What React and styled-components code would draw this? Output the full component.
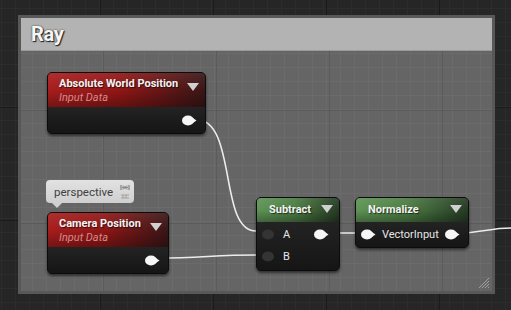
import styled, { createGlobalStyle } from "styled-components";

const Global = createGlobalStyle`
  html, body { margin: 0; padding: 0; background: #262626; }
  body { font-family: Roboto, "Open Sans", sans-serif; }
`;

const Canvas = styled.div`
  position: relative;
  width: 511px;
  height: 310px;
  overflow: hidden;
  background-color: #262626;
  background-image:
    linear-gradient(90deg, #1b1b1b 1px, transparent 1px),
    linear-gradient(0deg, #1b1b1b 1px, transparent 1px),
    linear-gradient(90deg, #2c2c2c 1px, transparent 1px),
    linear-gradient(0deg, #2c2c2c 1px, transparent 1px);
  background-size: 113px 113px, 113px 113px, 14px 14px, 14px 14px;
  background-position: -13px -5px;
`;

const Comment = styled.div`
  position: absolute;
  left: 18px;
  top: 15px;
  width: 477px;
  height: 279px;
  box-sizing: border-box;
  border: 3px solid #585858;
  display: flex;
  flex-direction: column;
  background-color: #656565;
  background-image:
    linear-gradient(90deg, #5b5b5b 1px, transparent 1px),
    linear-gradient(0deg, #5b5b5b 1px, transparent 1px),
    linear-gradient(90deg, #6b6b6b 1px, transparent 1px),
    linear-gradient(0deg, #6b6b6b 1px, transparent 1px);
  background-size: 113px 113px, 113px 113px, 14px 14px, 14px 14px;
  background-position: -31px -20px;
`;

const CommentHeader = styled.div`
  height: 32px;
  background: #b3b3b3;
  border-bottom: 1px solid #9a9a9a;
  display: flex;
  align-items: center;
  padding-left: 10px;
  font-size: 20px;
  font-weight: 700;
  color: #f6f6f6;
  text-shadow: 1px 1px 1px #1a1a1a, 0 0 2px #333;
  letter-spacing: -0.3px;
`;

const Grip = styled.svg`
  position: absolute;
  right: 2px;
  bottom: 2px;
`;

const Node = styled.div`
  position: absolute;
  left: ${(p) => p.$x}px;
  top: ${(p) => p.$y}px;
  width: ${(p) => p.$w}px;
  border-radius: 5px;
  background: #1c1c1c;
  border: 1px solid #0c0c0c;
  box-shadow: 0 2px 3px rgba(0, 0, 0, 0.55);
  overflow: hidden;
  display: flex;
  flex-direction: column;
`;

const Header = styled.div`
  position: relative;
  height: ${(p) => p.$h}px;
  box-sizing: border-box;
  padding: ${(p) => (p.$tall ? "4px 22px 0 11px" : "0 22px 0 12px")};
  display: flex;
  flex-direction: column;
  justify-content: ${(p) => (p.$tall ? "flex-start" : "center")};
  background: ${(p) =>
    p.$kind === "red"
      ? "linear-gradient(90deg, #a81d1d 0%, #911616 45%, #3a1616 100%)"
      : "linear-gradient(90deg, #5f9455 0%, #4c7d44 45%, #263a24 100%)"};
  &::after {
    content: "";
    position: absolute;
    inset: 0;
    background: linear-gradient(180deg, rgba(255,255,255,0.08) 0%, rgba(0,0,0,0) 50%, rgba(0,0,0,0.3) 100%);
  }
`;

const Title = styled.div`
  position: relative;
  z-index: 1;
  font-size: 11px;
  font-weight: 700;
  color: #f2f2f2;
  line-height: 14px;
  white-space: nowrap;
  text-shadow: 1px 1px 1px rgba(0,0,0,0.6);
`;

const Sub = styled.div`
  position: relative;
  z-index: 1;
  font-size: 11px;
  font-style: italic;
  color: #d9898b;
  line-height: 14px;
  white-space: nowrap;
`;

const Arrow = styled.div`
  position: absolute;
  z-index: 1;
  right: 6px;
  top: ${(p) => p.$top}px;
  width: 0;
  height: 0;
  border-left: 6px solid transparent;
  border-right: 6px solid transparent;
  border-top: 8px solid #d0d0d0;
`;

const Body = styled.div`
  display: flex;
  flex-direction: column;
  padding: ${(p) => p.$pad || "0"};
  background: linear-gradient(180deg, #232323, #151515);
  flex: 1;
`;

const Row = styled.div`
  height: 22px;
  display: flex;
  align-items: center;
  justify-content: ${(p) => p.$justify || "space-between"};
  padding: 0 ${(p) => p.$pr || 8}px 0 ${(p) => p.$pl || 5}px;
`;

const Side = styled.div`
  display: flex;
  align-items: center;
  gap: 6px;
`;

const Label = styled.span`
  font-size: 11px;
  color: #e6e6e6;
`;

const Pin = ({ dim }) => (
  <svg width="15" height="11" viewBox="0 0 15 11">
    {dim ? (
      <ellipse cx="6" cy="5.5" rx="6" ry="5" fill="#343434" />
    ) : (
      <>
        <ellipse cx="6" cy="5.5" rx="6" ry="5" fill="#f6f6f6" />
        <path d="M10.5 2.8 L14.5 5.5 L10.5 8.2 Z" fill="#f6f6f6" />
      </>
    )}
  </svg>
);

const Bubble = styled.div`
  position: absolute;
  left: 46px;
  top: 180px;
  width: 88px;
  height: 23px;
  box-sizing: border-box;
  border-radius: 4px;
  background: linear-gradient(180deg, #e2e2e2, #cfcfcf);
  display: flex;
  align-items: center;
  padding-left: 8px;
  font-size: 11.5px;
  color: #404040;
  &::after {
    content: "";
    position: absolute;
    left: 6px;
    bottom: -5px;
    border-left: 5px solid transparent;
    border-right: 5px solid transparent;
    border-top: 5px solid #cfcfcf;
  }
`;

const BubbleIcons = styled.svg`
  position: absolute;
  right: 3px;
  top: 3px;
`;

const Wires = styled.svg`
  position: absolute;
  left: 0;
  top: 0;
`;

export default function App() {
  return (
    <>
      <Global />
      <Canvas>
        <Comment>
          <CommentHeader>Ray</CommentHeader>
          <Grip width="13" height="13" viewBox="0 0 13 13">
            <path d="M12 2 L2 12 M12 5 L5 12 M12 8 L8 12 M12 11 L11 12" stroke="#a0a0a0" strokeWidth="1" />
          </Grip>
        </Comment>

        <Wires width="511" height="310">
          <g fill="none" stroke="#ececec" strokeWidth="1.6">
            <path d="M195 119 C238 119 218 231 256 231" />
            <path d="M158 258 C200 258 215 255 256 255" />
            <path d="M326 233 L360 233" />
            <path d="M458 233 C480 233 490 228 511 228" />
          </g>
        </Wires>

        <Node $x={47} $y={72} $w={157}>
          <Header $kind="red" $h={34} $tall>
            <Title>Absolute World Position</Title>
            <Sub>Input Data</Sub>
            <Arrow $top={10} />
          </Header>
          <Body $pad="2px 0">
            <Row $justify="flex-end" $pr={8}>
              <Pin />
            </Row>
          </Body>
        </Node>

        <Bubble>
          perspective
          <BubbleIcons width="12" height="17" viewBox="0 0 12 17">
            <path d="M2 2 L2 7 M10 2 L10 7 M3 4.5 L9 4.5" stroke="#8a8a8a" strokeWidth="1.3" />
            <path d="M4 2.5 L6 4.5 L4 6.5 M8 2.5 L6 4.5 L8 6.5" stroke="#8a8a8a" strokeWidth="1" fill="none" />
            <path d="M2 12 L10 12 M2 15 L10 15 M4 12 L4 15 M7 12 L7 15" stroke="#a0a0a0" strokeWidth="1" />
          </BubbleIcons>
        </Bubble>

        <Node $x={47} $y={212} $w={120}>
          <Header $kind="red" $h={34} $tall>
            <Title>Camera Position</Title>
            <Sub>Input Data</Sub>
            <Arrow $top={10} />
          </Header>
          <Body $pad="2px 0">
            <Row $justify="flex-end" $pr={8}>
              <Pin />
            </Row>
          </Body>
        </Node>

        <Node $x={256} $y={197} $w={82}>
          <Header $kind="green" $h={24}>
            <Title>Subtract</Title>
            <Arrow $top={7} />
          </Header>
          <Body $pad="1px 0 3px">
            <Row $pr={10}>
              <Side>
                <Pin dim />
                <Label>A</Label>
              </Side>
              <Pin />
            </Row>
            <Row>
              <Side>
                <Pin dim />
                <Label>B</Label>
              </Side>
            </Row>
          </Body>
        </Node>

        <Node $x={355} $y={197} $w={112}>
          <Header $kind="green" $h={24}>
            <Title>Normalize</Title>
            <Arrow $top={7} />
          </Header>
          <Body $pad="1px 0 2px">
            <Row $pr={8}>
              <Side>
                <Pin />
                <Label>VectorInput</Label>
              </Side>
              <Pin />
            </Row>
          </Body>
        </Node>
      </Canvas>
    </>
  );
}
